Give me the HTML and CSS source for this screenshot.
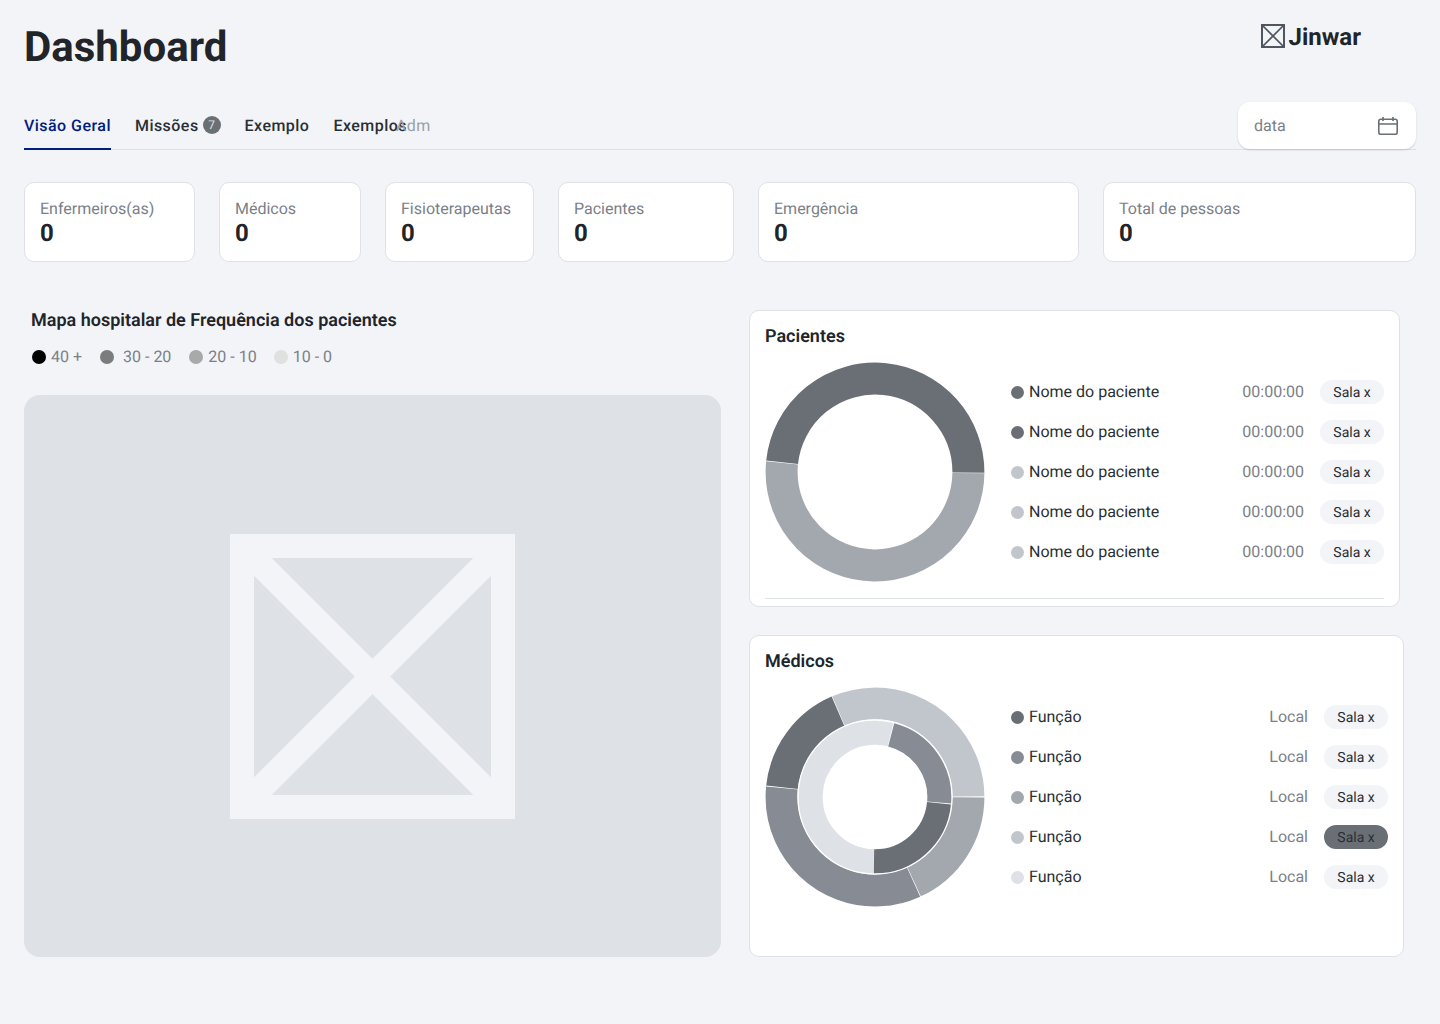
FILE: index.html
```html
<!DOCTYPE html>
<html lang="en">
<head>
    <meta charset="UTF-8">
    <title>Dashboard</title>
    <link rel="stylesheet" href="styles.css">
</head>
<body>
    <header class="top">
        <h1>Dashboard</h1>
        <div class="logo">
            <svg width="24" height="24" viewBox="0 0 24 24" fill="none" stroke="#4f5660">
                <rect x="1" y="1" width="22" height="22" stroke-width="2"/>
                <path d="M1 1 23 23M23 1 1 23" stroke-width="1.7"/>
            </svg>
            <span>Jinwar</span>
        </div>
    </header>

    <nav class="tabs">
        <a class="tab active">Visão Geral</a>
        <a class="tab">Missões <span class="badge">7</span></a>
        <a class="tab">Exemplo</a>
        <a class="tab">Exemplos</a>
        <a class="tab adm">Adm</a>
        <div class="date">
            <span>data</span>
            <svg width="20" height="18" viewBox="0 0 20 18" fill="none" stroke="#6a6f76" stroke-width="1.6">
                <rect x="0.8" y="2.3" width="18.4" height="14.9" rx="2"/>
                <path d="M0.8 7H19.2M5 0V4M15 0V4"/>
            </svg>
        </div>
    </nav>

    <section class="stats">
        <div class="stat"><p>Enfermeiros(as)</p><strong>0</strong></div>
        <div class="stat"><p>Médicos</p><strong>0</strong></div>
        <div class="stat"><p>Fisioterapeutas</p><strong>0</strong></div>
        <div class="stat"><p>Pacientes</p><strong>0</strong></div>
        <div class="stat"><p>Emergência</p><strong>0</strong></div>
        <div class="stat"><p>Total de pessoas</p><strong>0</strong></div>
    </section>

    <main class="content">
        <section class="map-col">
            <h2 class="map-title">Mapa hospitalar de Frequência dos pacientes</h2>
            <div class="legend">
                <span class="key"><i class="dot k1"></i>40 +</span>
                <span class="key wide"><i class="dot k2"></i>30 - 20</span>
                <span class="key"><i class="dot k3"></i>20 - 10</span>
                <span class="key last"><i class="dot k4"></i>10 - 0</span>
            </div>
            <div class="map">
                <svg width="285" height="285" viewBox="0 0 285 285" fill="none" stroke="#f3f4f8">
                    <rect x="12" y="12" width="261" height="261" stroke-width="24"/>
                    <path d="M0 0 285 285M285 0 0 285" stroke-width="25"/>
                </svg>
            </div>
        </section>

        <section class="side-col">
            <div class="card first">
                <h2>Pacientes</h2>
                <div class="card-body">
                    <svg class="donut" width="220" height="220" viewBox="0 0 220 220" fill="none" stroke-width="32">
                        <circle cx="110" cy="110" r="93.4" pathLength="360" stroke="#6a6f76" stroke-dasharray="174.3 360" transform="rotate(186 110 110)"/>
                        <circle cx="110" cy="110" r="93.4" pathLength="360" stroke="#a3a8af" stroke-dasharray="185 360" transform="rotate(0.7 110 110)"/>
                    </svg>
                    <ul class="rows">
                        <li><i class="dot c1"></i><span class="name">Nome do paciente</span><span class="meta">00:00:00</span><span class="pill">Sala x</span></li>
                        <li><i class="dot c1"></i><span class="name">Nome do paciente</span><span class="meta">00:00:00</span><span class="pill">Sala x</span></li>
                        <li><i class="dot c4"></i><span class="name">Nome do paciente</span><span class="meta">00:00:00</span><span class="pill">Sala x</span></li>
                        <li><i class="dot c4"></i><span class="name">Nome do paciente</span><span class="meta">00:00:00</span><span class="pill">Sala x</span></li>
                        <li><i class="dot c4"></i><span class="name">Nome do paciente</span><span class="meta">00:00:00</span><span class="pill">Sala x</span></li>
                    </ul>
                </div>
                <hr class="line">
            </div>

            <div class="card second">
                <h2>Médicos</h2>
                <div class="card-body">
                    <svg class="donut" width="220" height="220" viewBox="0 0 220 220" fill="none">
                        <g stroke-width="32">
                            <circle cx="110" cy="110" r="93.4" pathLength="360" stroke="#c1c5cc" stroke-dasharray="112.6 360" transform="rotate(247 110 110)"/>
                            <circle cx="110" cy="110" r="93.4" pathLength="360" stroke="#6a6f76" stroke-dasharray="60.6 360" transform="rotate(186 110 110)"/>
                            <circle cx="110" cy="110" r="93.4" pathLength="360" stroke="#868b94" stroke-dasharray="120 360" transform="rotate(65.6 110 110)"/>
                            <circle cx="110" cy="110" r="93.4" pathLength="360" stroke="#a3a8af" stroke-dasharray="65 360" transform="rotate(0.2 110 110)"/>
                        </g>
                        <circle cx="110" cy="110" r="77" stroke="#fff" stroke-width="1.5"/>
                        <g stroke-width="24">
                            <circle cx="110" cy="110" r="64.3" pathLength="360" stroke="#dee1e6" stroke-dasharray="193 360" transform="rotate(91 110 110)"/>
                            <circle cx="110" cy="110" r="64.3" pathLength="360" stroke="#868b94" stroke-dasharray="80.2 360" transform="rotate(284.6 110 110)"/>
                            <circle cx="110" cy="110" r="64.3" pathLength="360" stroke="#6a6f76" stroke-dasharray="85.2 360" transform="rotate(5.6 110 110)"/>
                        </g>
                    </svg>
                    <ul class="rows">
                        <li><i class="dot c1"></i><span class="name">Função</span><span class="meta">Local</span><span class="pill">Sala x</span></li>
                        <li><i class="dot c2"></i><span class="name">Função</span><span class="meta">Local</span><span class="pill">Sala x</span></li>
                        <li><i class="dot c3"></i><span class="name">Função</span><span class="meta">Local</span><span class="pill">Sala x</span></li>
                        <li><i class="dot c4"></i><span class="name">Função</span><span class="meta">Local</span><span class="pill dark">Sala x</span></li>
                        <li><i class="dot c5"></i><span class="name">Função</span><span class="meta">Local</span><span class="pill">Sala x</span></li>
                    </ul>
                </div>
            </div>
        </section>
    </main>
</body>
</html>
```

FILE: styles.css
```css
* {
    box-sizing: border-box;
}

body {
    margin: 0;
    padding: 0 24px;
    min-height: 1024px;
    background-color: #f3f4f8;
    font-family: Roboto, "Liberation Sans", sans-serif;
    color: #212529;
    text-rendering: geometricPrecision;
}

h1, h2, p, ul {
    margin: 0;
    padding: 0;
}

/* header */
.top {
    display: flex;
    justify-content: space-between;
    height: 102px;
    padding-top: 23px;
}

.top h1 {
    font-size: 42px;
    line-height: 49px;
    font-weight: 700;
}

.logo {
    display: flex;
    align-items: center;
    gap: 4px;
    height: 26px;
    margin-right: 55px;
    font-size: 24px;
    font-weight: 700;
    line-height: 26px;
}

.logo span {
    padding-top: 2px;
}

/* tabs */
.tabs {
    display: flex;
    align-items: stretch;
    gap: 24px;
    height: 48px;
    border-bottom: 1px solid #dee1e6;
    font-size: 16px;
    font-weight: 500;
    letter-spacing: 0.46px;
}

.tab {
    display: flex;
    align-items: center;
    gap: 4px;
    padding-bottom: 1px;
    color: #2a2f33;
}

.tab.active {
    padding-top: 2px;
    color: #002080;
    border-bottom: 2px solid #002080;
    margin-bottom: -1px;
}

.tab.adm {
    margin-left: -35px;
    color: #9aa0a6;
    font-weight: 400;
}

.badge {
    display: flex;
    align-items: center;
    justify-content: center;
    width: 18px;
    height: 18px;
    border-radius: 50%;
    background-color: #6a6f76;
    color: #dee1e6;
    font-size: 12px;
    font-weight: 400;
    letter-spacing: 0;
}

.date {
    display: flex;
    align-items: center;
    justify-content: space-between;
    width: 178px;
    height: 47px;
    margin-left: auto;
    padding: 0 18px 0 16px;
    background-color: #fff;
    border-radius: 12px;
    box-shadow: 0 1px 2px rgba(0, 0, 0, 0.15);
    color: #7a8088;
    font-weight: 400;
    letter-spacing: 0;
}

/* stat cards */
.stats {
    display: grid;
    grid-template-columns: 171px 142px 149px 176px 321px 313px;
    gap: 24px;
    margin-top: 32px;
}

.stat {
    height: 80px;
    padding: 16px 15px;
    background-color: #fff;
    border: 1px solid #dee1e6;
    border-radius: 10px;
}

.stat p {
    font-size: 16px;
    line-height: 19px;
    color: #7a8088;
}

.stat strong {
    display: block;
    font-size: 24px;
    line-height: 31px;
    font-weight: 700;
}

/* lower area */
.content {
    display: flex;
    gap: 28px;
    margin-top: 48px;
}

.map-col {
    width: 697px;
}

.map-title {
    padding-left: 7px;
    font-size: 18px;
    line-height: 22px;
    font-weight: 600;
}

.legend {
    display: flex;
    gap: 18px;
    margin-top: 15px;
    padding-left: 8px;
    font-size: 16px;
    line-height: 20px;
    color: #7a8088;
}

.key {
    display: flex;
    align-items: center;
    gap: 5px;
}

.key.wide {
    gap: 9px;
}

.key.last {
    margin-left: -1px;
}

.dot {
    flex: none;
    width: 13px;
    height: 13px;
    border-radius: 50%;
}

.key .dot {
    width: 14px;
    height: 14px;
}

.k1 { background-color: #000; }
.k2 { background-color: #7c7c7c; }
.k3 { background-color: #a9a9a9; }
.k4 { background-color: #e0e0e0; }

.c1 { background-color: #6a6f76; }
.c2 { background-color: #868b94; }
.c3 { background-color: #a3a8af; }
.c4 { background-color: #c1c5cc; }
.c5 { background-color: #dee1e6; }

.map {
    display: flex;
    align-items: center;
    justify-content: center;
    height: 562px;
    margin-top: 28px;
    background-color: #dee1e6;
    border-radius: 16px;
}

.side-col {
    display: flex;
    flex-direction: column;
    align-items: flex-start;
    gap: 28px;
}

.card {
    padding: 12px 15px 7px;
    background-color: #fff;
    border: 1px solid #dee1e6;
    border-radius: 10px;
}

.card.first {
    width: 651px;
    height: 297px;
}

.card.second {
    width: 655px;
    height: 322px;
}

.card h2 {
    font-size: 18px;
    line-height: 28px;
    font-weight: 600;
}

.card-body {
    display: flex;
    gap: 26px;
    margin-top: 11px;
}

.donut {
    flex: none;
}

.rows {
    flex: 1;
    margin-top: 10px;
    list-style: none;
}

.rows li {
    display: flex;
    align-items: center;
    height: 40px;
    font-size: 16px;
}

.rows .name {
    flex: 1;
    margin: 0 0 2px 5px;
    color: #2a2f33;
}

.rows .meta {
    margin: 0 16px 2px 0;
    color: #7a8088;
}

.pill {
    width: 64px;
    height: 24px;
    background-color: #f3f4f8;
    border-radius: 12px;
    font-size: 14px;
    line-height: 26px;
    text-align: center;
    color: #2a2f33;
}

.pill.dark {
    background-color: #6a6f76;
}

.line {
    height: 1px;
    margin: 16px 0 0;
    border: none;
    background-color: #dee1e6;
}
```
